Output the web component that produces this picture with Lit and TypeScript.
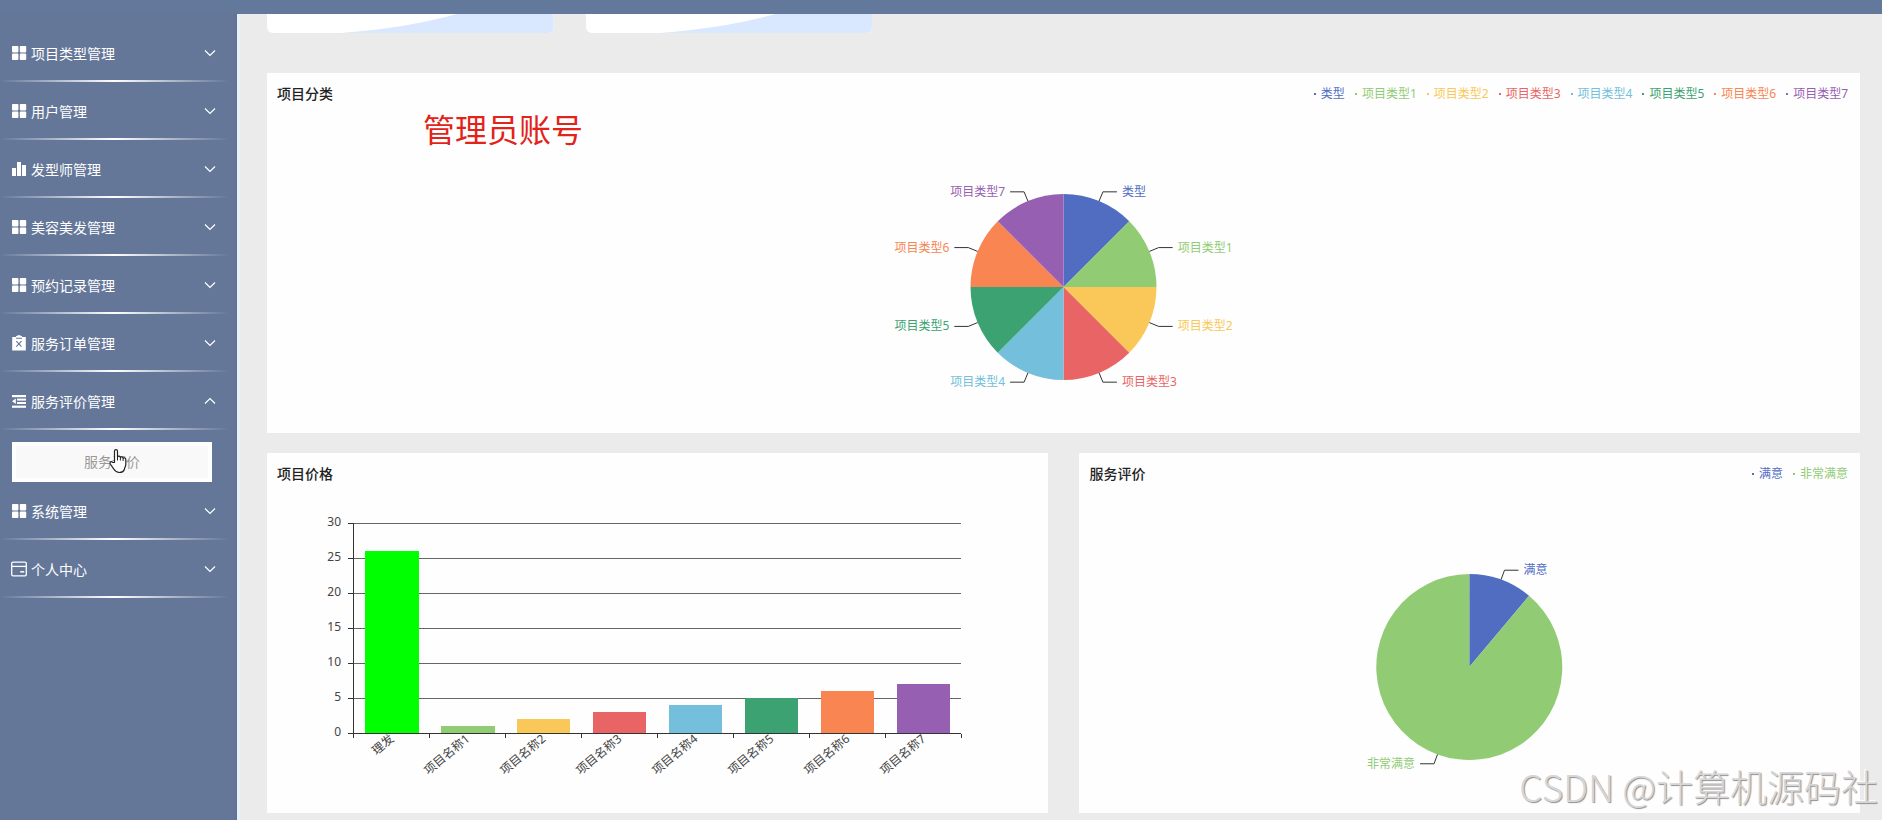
import { LitElement, html, svg, css } from "lit";
import { customElement, property, state } from "lit/decorators.js";

const FONT = css`"Noto Sans", "Noto Sans CJK SC", sans-serif`;

interface Slice { name: string; value: number; color: string; }

const TYPES: Slice[] = [
  { name: "类型", value: 1, color: "#506dc2" },
  { name: "项目类型1", value: 1, color: "#91cc75" },
  { name: "项目类型2", value: 1, color: "#fac858" },
  { name: "项目类型3", value: 1, color: "#e96565" },
  { name: "项目类型4", value: 1, color: "#73bfdc" },
  { name: "项目类型5", value: 1, color: "#3ca272" },
  { name: "项目类型6", value: 1, color: "#f98552" },
  { name: "项目类型7", value: 1, color: "#965fb1" },
];

const PRICES: Slice[] = [
  { name: "理发", value: 26, color: "#00ff00" },
  ...TYPES.slice(1).map((t, i) => ({ name: `项目名称${i + 1}`, value: i + 1, color: t.color })),
];

const REVIEWS: Slice[] = [
  { name: "满意", value: 1, color: "#506dc2" },
  { name: "非常满意", value: 8, color: "#91cc75" },
];

const ICONS: Record<string, unknown> = {
  grid: svg`<g fill="#fff"><rect x="1" y="1" width="6.4" height="6.4" rx=".8"/><rect x="8.8" y="1" width="6.4" height="6.4" rx=".8"/><rect x="1" y="8.6" width="6.4" height="6.4" rx=".8"/><rect x="8.8" y="8.6" width="6.4" height="6.4" rx=".8"/></g>`,
  bars: svg`<g fill="#fff"><rect x="1" y="7" width="4" height="8"/><rect x="6" y="1" width="4" height="14"/><rect x="11" y="4" width="4" height="11"/></g>`,
  order: svg`<path fill="#fff" d="M1.2 2H5V1h1.4V.3h3.2V1H11v1h3.8v13.4H1.2z"/><path d="M5 3.2h6M5.3 6.2l5.2 5.4M10.5 6.2l-5.2 5.4" stroke="#657799" stroke-width="1.1" fill="none"/>`,
  fold: svg`<g fill="#fff"><rect x="1" y="2" width="14" height="2.2"/><rect x="6" y="5.6" width="9" height="2"/><rect x="6" y="9" width="9" height="2"/><rect x="1" y="12.6" width="14" height="2.2"/><path d="M1 8.3l3.8-2.8v5.6z"/></g>`,
  card: svg`<g fill="none" stroke="#fff" stroke-width="1.3"><rect x=".7" y="1.2" width="14.6" height="13.6" rx="1.4"/><path d="M.7 5.4h14.6"/><path d="M9.2 10.8h4" stroke-width="1.5"/></g>`,
};

@customElement("pie-chart")
export class PieChart extends LitElement {
  static styles = css`
    :host { display: block; }
    .pie { display: block; width: 100%; height: 240px; font: 12px ${FONT}; }
  `;
  @property({ attribute: false }) data: Slice[] = [];

  render() {
    const r = 93;
    const total = this.data.reduce((s, d) => s + d.value, 0);
    let turn = 0;
    const at = (a: number, d: number) => [Math.sin(a) * d, -Math.cos(a) * d];
    return html`<svg class="pie" viewBox="-200 -120 400 240" role="img">
      ${this.data.map((d) => {
        const a0 = (turn / total) * Math.PI * 2;
        turn += d.value;
        const a1 = (turn / total) * Math.PI * 2;
        const mid = (a0 + a1) / 2;
        const [x0, y0] = at(a0, r);
        const [x1, y1] = at(a1, r);
        const [lx, ly] = at(mid, r);
        const [ex, ey] = at(mid, r + 10);
        const side = ex >= 0 ? 1 : -1;
        return svg`
          <path d="M0 0L${x0} ${y0}A${r} ${r} 0 ${a1 - a0 > Math.PI ? 1 : 0} 1 ${x1} ${y1}Z" fill=${d.color}></path>
          <path d="M${lx} ${ly}L${ex} ${ey}H${ex + side * 14}" fill="none" stroke="#333"></path>
          <text x=${ex + side * 19} y=${ey + 4} text-anchor=${side > 0 ? "start" : "end"} fill=${d.color}>${d.name}</text>`;
      })}
    </svg>`;
  }
}

@customElement("bar-chart")
export class BarChart extends LitElement {
  static styles = css`
    :host { display: block; font: 12px ${FONT}; color: #444; }
    .chart { display: grid; grid-template-columns: 10% 80%; }
    .scale { display: flex; flex-direction: column; height: 245px; margin: -19px 12px 0 0; text-align: right; }
    .scale span { height: 35px; line-height: 35px; }
    .plot {
      display: flex; height: 210px; border-bottom: 1px solid #333; border-left: 1px solid #333;
      background: repeating-linear-gradient(to bottom, #666 0 1px, transparent 1px 35px);
      position: relative;
    }
    .marks {
      position: absolute; left: -6px; top: 0; width: 5px; height: 211px;
      background: repeating-linear-gradient(to bottom, #333 0 1px, transparent 1px 35px);
    }
    .slot { flex: 1; display: flex; align-items: flex-end; justify-content: center; position: relative; }
    .slot::after, .slot:first-of-type::before {
      content: ""; position: absolute; top: 211px; right: 0; width: 1px; height: 4px; background: #333;
    }
    .slot:first-of-type::before { right: auto; left: -1px; }
    .bar { width: 70%; }
    .name {
      position: absolute; top: 205px; right: 50%; line-height: 18px; white-space: nowrap;
      transform: rotate(-40deg); transform-origin: 100% 50%;
    }
  `;
  @property({ attribute: false }) data: Slice[] = [];
  @property({ type: Number }) max = 30;

  render() {
    const steps = [6, 5, 4, 3, 2, 1, 0].map((n) => (n * this.max) / 6);
    return html`<div class="chart">
      <div class="scale">${steps.map((n) => html`<span>${n}</span>`)}</div>
      <div class="plot">
        <span class="marks"></span>
        ${this.data.map((d) => html`<div class="slot">
          <div class="bar" style="height:${(d.value / this.max) * 100}%;background:${d.color}"></div>
          <span class="name">${d.name}</span>
        </div>`)}
      </div>
    </div>`;
  }
}

@customElement("chart-panel")
export class ChartPanel extends LitElement {
  static styles = css`
    :host { display: block; background: #fefefe; height: 360px; box-sizing: border-box; padding: 10px; font-family: ${FONT}; }
    .head { display: flex; justify-content: space-between; margin-bottom: 38px; }
    .title { margin: 0; font-size: 14px; line-height: 22px; font-weight: 500; color: #222; }
    .legend { display: flex; gap: 10px; margin: 0; padding: 0 2px 0 0; list-style: none; font-size: 12px; line-height: 20px; }
    .key { display: flex; align-items: center; gap: 5px; }
    .dot { width: 2px; height: 2px; background: currentColor; }
  `;
  @property() heading = "";
  @property({ attribute: false }) legend: Slice[] = [];

  render() {
    return html`<div class="head">
        <h2 class="title">${this.heading}</h2>
        <ul class="legend">${this.legend.map((l) => html`<li class="key" style="color:${l.color}"><span class="dot"></span>${l.name}</li>`)}</ul>
      </div>
      <slot></slot>`;
  }
}

const MENU = [
  { name: "项目类型管理", icon: "grid" },
  { name: "用户管理", icon: "grid" },
  { name: "发型师管理", icon: "bars" },
  { name: "美容美发管理", icon: "grid" },
  { name: "预约记录管理", icon: "grid" },
  { name: "服务订单管理", icon: "order" },
  { name: "服务评价管理", icon: "fold", children: ["服务评价"] },
  { name: "系统管理", icon: "grid" },
  { name: "个人中心", icon: "card" },
];

@customElement("side-menu")
export class SideMenu extends LitElement {
  static styles = css`
    :host { display: block; width: 237px; flex: none; box-sizing: border-box; padding-top: 10px; background: linear-gradient(to right, #657799 232px, #5f7298); font-family: ${FONT}; }
    .item {
      display: flex; align-items: center; gap: 4px; width: 100%; height: 58px; border: 0; padding: 0 22px 0 11px;
      font: 14px ${FONT}; color: #fff; text-align: left; cursor: pointer;
      background: linear-gradient(to right, transparent, #fff 50%, transparent) 0 100% / 228px 2px no-repeat;
    }
    .icon { width: 16px; height: 16px; flex: none; }
    .label { flex: 1; }
    .arrow { width: 10px; height: 6px; fill: none; stroke: #fff; stroke-width: 1.2; overflow: visible; }
    .sub { padding: 12px 25px 0 12px; }
    .link {
      display: block; height: 40px; box-sizing: border-box; border: 4px solid #fff; background: #f9f9fa;
      text-align: center; font-size: 14px; line-height: 32px; color: #999; text-decoration: none;
    }
  `;
  @state() private open = "服务评价管理";

  render() {
    return html`<nav>${MENU.map((m) => {
      const open = this.open === m.name;
      return html`<button class="item" aria-expanded=${open} @click=${() => (this.open = open ? "" : m.name)}>
          <svg class="icon" viewBox="0 0 16 16">${ICONS[m.icon]}</svg>
          <span class="label">${m.name}</span>
          <svg class="arrow" viewBox="0 0 10 6"><path d=${open ? "M0 5.5l5-5 5 5" : "M0 .5l5 5 5-5"}></path></svg>
        </button>
        ${open && m.children ? html`<div class="sub">${m.children.map((c) => html`<a class="link" href="#">${c}</a>`)}</div>` : ""}`;
    })}</nav>`;
  }
}

@customElement("app-root")
export class AppRoot extends LitElement {
  static styles = css`
    :host { display: flex; flex-direction: column; height: 100vh; overflow: hidden; position: relative; font-family: ${FONT}; background: #ebebeb; }
    .top { height: 14px; flex: none; background: #62799b; }
    .body { display: flex; flex: 1; min-height: 0; }
    .main { flex: 1; min-width: 0; overflow: hidden; border-left: 3px solid #e9f1f8; padding: 0 22px 0 27px; }
    .stats { display: flex; gap: 2%; align-items: flex-end; height: 19px; overflow: hidden; margin-bottom: 40px; }
    .stat { width: 18%; height: 120px; flex: none; background: #fff; border-radius: 6px; overflow: hidden; display: flex; }
    .wave { width: 100%; height: 100%; }
    .row { display: grid; grid-template-columns: 49% 49%; justify-content: space-between; margin-top: 20px; }
    .pie { padding-top: 24px; }
    .note { position: absolute; left: 423px; top: 106px; font-size: 32px; line-height: 48px; color: #e2231a; }
    .mark {
      position: absolute; right: 4px; bottom: 8px; font: 300 37px/52px "Noto Sans CJK SC", sans-serif; color: #d6d6d8;
      text-shadow: 1px 1px 1px #8f8f8f, -1px -1px 0 #fff;
    }
    .hand { position: absolute; left: 108px; top: 448px; width: 20px; height: 26px; }
  `;

  render() {
    const stat = html`<div class="stat"><svg class="wave" viewBox="0 0 286 120" preserveAspectRatio="none">
      <path d="M74 120Q140 115 189 101Q250 80 286 30V120Z" fill="#d9e8ff"></path></svg></div>`;
    return html`
      <header class="top"></header>
      <div class="body">
        <side-menu></side-menu>
        <main class="main">
          <section class="stats">${stat}${stat}</section>
          <chart-panel heading="项目分类" .legend=${TYPES}><pie-chart class="pie" .data=${TYPES}></pie-chart></chart-panel>
          <div class="row">
            <chart-panel heading="项目价格"><bar-chart .data=${PRICES}></bar-chart></chart-panel>
            <chart-panel heading="服务评价" .legend=${REVIEWS}><pie-chart class="pie" .data=${REVIEWS}></pie-chart></chart-panel>
          </div>
        </main>
      </div>
      <div class="note">管理员账号</div>
      <div class="mark">CSDN @计算机源码社</div>
      <svg class="hand" viewBox="0 0 20 26"><path d="M6.5 14.5V3.2c0-2.2 3-2.2 3 0V9c.4-1.300 2.800-1.200 2.900.5.5-1.100 2.600-.9 2.700.8.6-.9 2.700-.6 2.700 1.200v5.300c0 1.500-1.300 2.800-1.300 4.200-.6 2.200-2.500 3.500-5.200 3.500-2.400 0-4-1-5.300-3.200L2.300 16c-1-1.700 1-3 2.300-1.700z" fill="#fff" stroke="#222" stroke-width="1.200" stroke-linejoin="round"></path><path d="M9.500 9v3.500M12.400 9.500v3M15.100 10.500v2.500" stroke="#222" stroke-width="1" fill="none"></path></svg>
    `;
  }
}
